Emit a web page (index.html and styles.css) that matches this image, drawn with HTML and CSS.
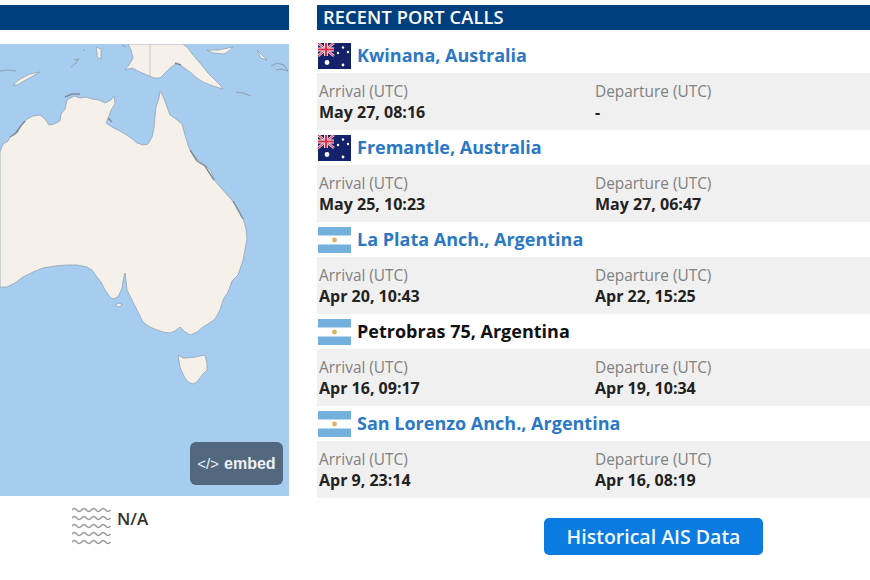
FILE: index.html
```html
<!DOCTYPE html>
<html lang="en">
<head>
<meta charset="utf-8">
<title>Recent port calls</title>
<link rel="stylesheet" href="styles.css">
</head>
<body>
<svg class="defs" width="0" height="0" aria-hidden="true">
  <symbol id="flag-au" viewBox="0 0 33 26">
    <rect width="33" height="26" fill="#14226b"/>
    <path d="M0 0L16 13M16 0L0 13" stroke="#f4c6cf" stroke-width="2.6"/>
    <path d="M0 0L16 13M16 0L0 13" stroke="#d8304a" stroke-width="1"/>
    <path d="M8 0V13M0 6.500H16" stroke="#fbe4e8" stroke-width="4"/>
    <path d="M8 0V13M0 6.500H16" stroke="#d8304a" stroke-width="2.200"/>
    <circle cx="9" cy="19.500" r="2.400" fill="#fff"/>
    <circle cx="25" cy="4.500" r="1.200" fill="#fff"/>
    <circle cx="20" cy="10" r="1.200" fill="#fff"/>
    <circle cx="30" cy="9" r="1.200" fill="#fff"/>
    <circle cx="25" cy="22" r="1.400" fill="#fff"/>
  </symbol>
  <symbol id="flag-ar" viewBox="0 0 33 26">
    <rect width="33" height="26" fill="#fff"/>
    <rect width="33" height="8.500" fill="#74b0dd"/>
    <rect y="17.500" width="33" height="8.500" fill="#74b0dd"/>
    <circle cx="16.500" cy="13" r="2.400" fill="#dfb264"/>
  </symbol>
</svg>

<main class="page">
  <section class="left">
    <div class="bar"></div>
    <div class="map">
      <svg class="map-art" viewBox="0 44 289 452" width="289" height="452" role="img" aria-label="Map of Australia">
        <rect y="44" width="289" height="452" fill="#a6ccf0"/>
        <g fill="#f5f1ea" stroke="#93a3b2" stroke-width=".8" stroke-linejoin="round">
          <path d="M0 152L3 144L8 141L12 134L17 133L21 126L27 119L33 116L40 115L45 119L49 125L54 124L60 121L61 114L65 109L67 100L74 96L80 98L86 97L92 99L99 100L105 103L111 100L114 96L115 104L111 110L109 116L106 123L112 127L118 130L125 134L131 138L137 143L143 145L148 144L152 137L154 128L155 117L156 107L159 98L160 91L163 96L166 104L170 115L176 119L182 124L185 135L189 148L193 154L198 160L205 165L211 171L215 181L222 189L231 199L237 207L243 218L246 229L247 238L245 250L243 260L238 275L232 281L228 292L223 300L220 310L215 319L208 324L203 327L197 332L190 335L184 331L180 327L175 331L170 333L163 332L157 330L150 327L143 322L139 314L135 306L131 298L127 290L126 281L125 273L123 281L122 288L118 297L113 299L110 297L105 290L101 282L97 277L92 270L87 267L77 265L67 265L55 266L43 268L33 272L23 277L15 283L7 287L0 287Z"/>
          <path d="M178 355L183 358L187 358L195 357L205 355L207 363L207 370L203 374L200 378L197 382L193 384L188 382L185 378L182 372L180 367Z"/>
          <path d="M128 44L131 50L133 58L129 65L125 70L132 68L140 72L147 75L154 78L160 78L165 73L170 68L177 63L183 67L190 72L197 78L203 82L213 86L223 89L220 85L217 82L208 73L200 63L193 55L187 47L183 44Z"/>
          <path d="M13 85L20 79L30 74L40 72L33 76L24 81L17 85Z"/>
          <path d="M207 50L218 50L233 47L229 51L224 54L213 53Z"/>
          <path d="M257 50L262 55L267 60L261 58Z"/>
          <path d="M117 303L122 304L120 307L116 306Z"/>
          <path d="M96 47L101 49L101 55L101 59L97 57L97 52Z"/>
        </g>
        <path d="M150 44V76" stroke="#b9b6ad" stroke-width=".7"/>
        <g fill="none" stroke="#7f8d99" stroke-width="1.400" stroke-linejoin="round">
          <path d="M10 137L15 134L20 127L25 121"/>
          <path d="M65 97L72 94L80 94"/>
          <path d="M108 118L112 122"/>
          <path d="M190 150L197 161L205 166L214 180"/>
          <path d="M233 201L243 219"/>
          <path d="M175 63L181 65"/>
        </g>
        <g fill="none" stroke="#8f9eac" stroke-width="1" stroke-linejoin="round">
          <path d="M271 66L277 63L284 65L288 71L282 69L276 70"/>
          <path d="M71 67L75 64L79 59L74 60"/>
          <path d="M0 71L8 70L16 71"/>
          <path d="M236 92L243 93L251 96"/>
          <path d="M122 45L126 47"/>
          <path d="M83 49L85 51"/>
        </g>
      </svg>
      <a class="embed" href="#"><span class="embed-code">&lt;/&gt;</span> embed</a>
    </div>
    <div class="wave-row">
      <svg class="wave" viewBox="0 0 39 38" width="39" height="38" aria-hidden="true">
        <g fill="none" stroke="#9a9a9a" stroke-width="1.500">
          <path d="M0 3q2.400-3 4.800 0t4.800 0t4.800 0t4.800 0t4.800 0t4.800 0t4.800 0t4.800 0"/>
          <path d="M0 11q2.400-3 4.800 0t4.800 0t4.800 0t4.800 0t4.800 0t4.800 0t4.800 0t4.800 0"/>
          <path d="M0 19q2.400-3 4.800 0t4.800 0t4.800 0t4.800 0t4.800 0t4.800 0t4.800 0t4.800 0"/>
          <path d="M0 27q2.400-3 4.800 0t4.800 0t4.800 0t4.800 0t4.800 0t4.800 0t4.800 0t4.800 0"/>
          <path d="M0 35q2.400-3 4.800 0t4.800 0t4.800 0t4.800 0t4.800 0t4.800 0t4.800 0t4.800 0"/>
        </g>
      </svg>
      <span class="wave-value">N/A</span>
    </div>
  </section>

  <section class="right">
    <h2 class="bar bar-title">RECENT PORT CALLS</h2>
    <ul class="calls">
      <li>
        <div class="port"><svg class="flag"><use href="#flag-au"/></svg><a class="port-name" href="#">Kwinana, Australia</a></div>
        <div class="times">
          <div class="time"><span class="label">Arrival (UTC)</span><strong class="value">May 27, 08:16</strong></div>
          <div class="time"><span class="label">Departure (UTC)</span><strong class="value">-</strong></div>
        </div>
      </li>
      <li>
        <div class="port"><svg class="flag"><use href="#flag-au"/></svg><a class="port-name" href="#">Fremantle, Australia</a></div>
        <div class="times">
          <div class="time"><span class="label">Arrival (UTC)</span><strong class="value">May 25, 10:23</strong></div>
          <div class="time"><span class="label">Departure (UTC)</span><strong class="value">May 27, 06:47</strong></div>
        </div>
      </li>
      <li>
        <div class="port"><svg class="flag"><use href="#flag-ar"/></svg><a class="port-name" href="#">La Plata Anch., Argentina</a></div>
        <div class="times">
          <div class="time"><span class="label">Arrival (UTC)</span><strong class="value">Apr 20, 10:43</strong></div>
          <div class="time"><span class="label">Departure (UTC)</span><strong class="value">Apr 22, 15:25</strong></div>
        </div>
      </li>
      <li>
        <div class="port"><svg class="flag"><use href="#flag-ar"/></svg><span class="port-name port-plain">Petrobras 75, Argentina</span></div>
        <div class="times">
          <div class="time"><span class="label">Arrival (UTC)</span><strong class="value">Apr 16, 09:17</strong></div>
          <div class="time"><span class="label">Departure (UTC)</span><strong class="value">Apr 19, 10:34</strong></div>
        </div>
      </li>
      <li>
        <div class="port"><svg class="flag"><use href="#flag-ar"/></svg><a class="port-name" href="#">San Lorenzo Anch., Argentina</a></div>
        <div class="times">
          <div class="time"><span class="label">Arrival (UTC)</span><strong class="value">Apr 9, 23:14</strong></div>
          <div class="time"><span class="label">Departure (UTC)</span><strong class="value">Apr 16, 08:19</strong></div>
        </div>
      </li>
    </ul>
    <div class="actions"><a class="btn" href="#">Historical AIS Data</a></div>
  </section>
</main>
</body>
</html>
```
FILE: styles.css
```css
* { box-sizing: border-box; }
html, body { margin: 0; padding: 0; background: #fff; }
body { font-family: "Open Sans", "Noto Sans", sans-serif; color: #222; overflow: hidden; }
.defs { display: block; height: 0; }
.page {
  display: grid;
  grid-template-columns: 289px 553px;
  column-gap: 28px;
  width: 870px;
  height: 580px;
  padding-top: 5px;
}
.bar {
  height: 25px;
  margin: 0;
  background: #003f7f;
}
.bar-title {
  padding-left: 6px;
  color: #fff;
  font-size: 18.2px;
  font-weight: 600;
  line-height: 25px;
  letter-spacing: 0.15px;
}
.map {
  position: relative;
  height: 452px;
  margin-top: 14px;
}
.map-art { display: block; }
.embed {
  position: absolute;
  right: 6px;
  bottom: 11px;
  display: flex;
  align-items: center;
  justify-content: center;
  gap: 5px;
  width: 93px;
  height: 43px;
  border-radius: 6px;
  background: #51687f;
  color: #eef1f4;
  font-family: "Liberation Sans", sans-serif;
  font-size: 16px;
  font-weight: 700;
  text-decoration: none;
}
.embed-code { font-weight: 400; font-size: 15px; }
.wave-row {
  display: flex;
  align-items: flex-start;
  gap: 6px;
  margin-top: 11px;
  margin-left: 72px;
}
.wave-value {
  font-size: 17px;
  font-weight: 600;
  line-height: 24px;
  color: #333;
}
.calls { list-style: none; margin: 8px 0 0; padding: 0; }
.port {
  display: flex;
  align-items: center;
  gap: 6px;
  height: 35px;
  padding-left: 1px;
}
.flag { display: block; width: 33px; height: 26px; flex: none; }
.port-name {
  position: relative;
  top: -1px;
  color: #2b78c5;
  font-size: 18px;
  font-weight: 700;
  text-decoration: none;
}
.port-plain { color: #111; }
.times {
  display: grid;
  grid-template-columns: 276px 1fr;
  height: 57px;
  padding: 8px 0 0 2px;
  background: #f0f0f0;
}
.time { display: flex; flex-direction: column; }
.label { color: #808080; font-size: 15.4px; line-height: 21px; }
.value { color: #222; font-size: 16px; font-weight: 700; line-height: 20px; }
.actions { display: flex; padding-top: 20px; padding-left: 227px; }
.btn {
  display: flex;
  align-items: center;
  justify-content: center;
  width: 219px;
  height: 37px;
  border-radius: 5px;
  background: #0a7be0;
  color: #f2f8fe;
  font-size: 19.5px;
  font-weight: 600;
  text-decoration: none;
}
```
